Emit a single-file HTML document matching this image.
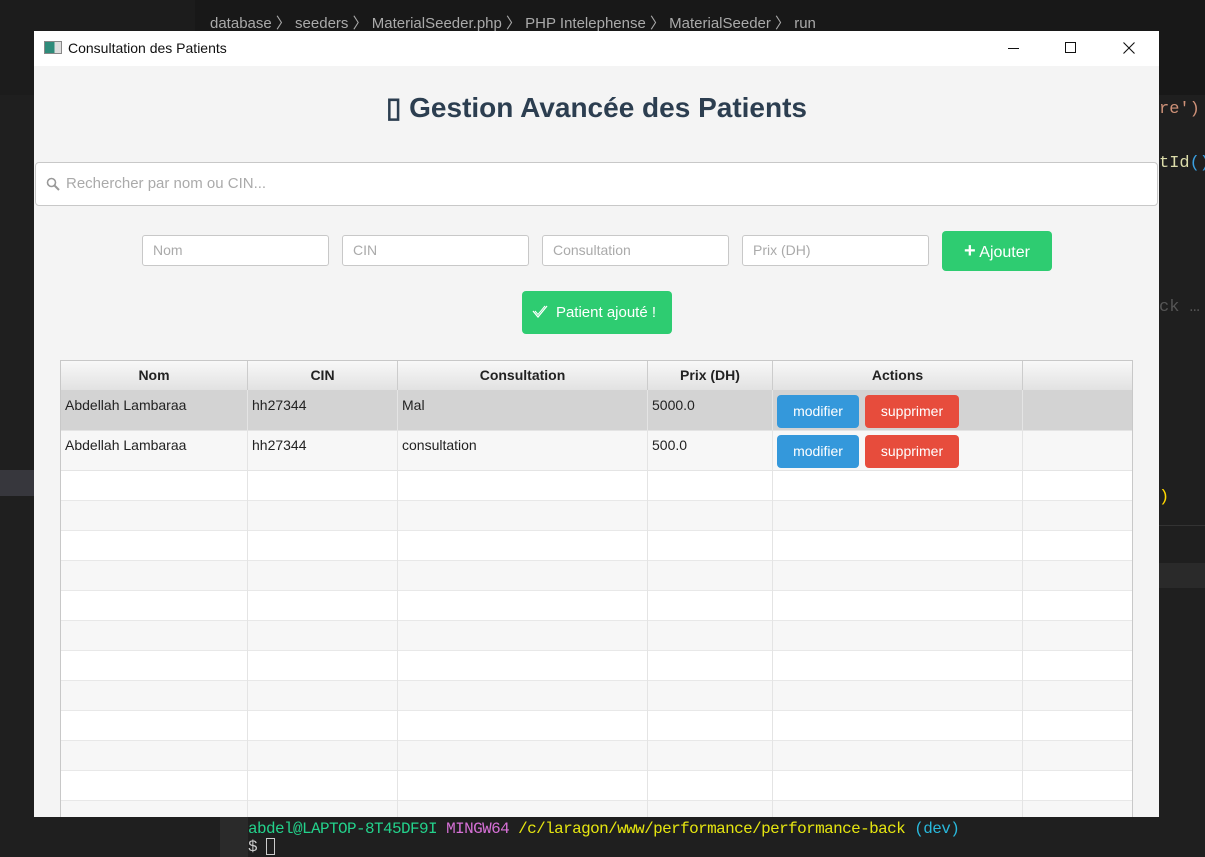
<!DOCTYPE html>
<html><head><meta charset="utf-8"><style>
*{box-sizing:border-box;margin:0;padding:0}
body{width:1205px;height:857px;background:#1f1f1f;position:relative;overflow:hidden;font-family:"Liberation Sans",sans-serif}
.abs{position:absolute}
.win{left:34px;top:31px;width:1125px;height:786px;background:#f4f4f4;overflow:hidden}
.tb{left:0;top:0;width:1125px;height:35px;background:#fff;font-size:14px;color:#111}
.inp{position:absolute;background:#fff;border:1px solid #c8c8c8;border-radius:3px;font-size:14px;color:#aaa;padding-left:10px;line-height:29px;height:31px}
.hdr{position:absolute;top:0;height:29px;background:linear-gradient(#f8f8f8,#e2e2e2);border-right:1px solid #ccc;font-weight:bold;font-size:14px;color:#222;text-align:center;line-height:29px}
.cell{position:absolute;font-size:14px;color:#222;padding-left:4px;padding-top:7px}
.btn{position:absolute;height:33px;border-radius:4px;color:#fff;font-size:14px;text-align:center;line-height:33px}
</style></head><body>
<div class="abs" style="left:195px;top:0;width:1010px;height:95px;background:#181818"></div>
<div class="abs" style="left:0;top:0;width:195px;height:95px;background:#1c1c1c"></div>
<div class="abs" style="left:210px;top:12px;font-size:15px;color:#aaa">database 〉 seeders 〉 MaterialSeeder.php 〉 PHP Intelephense 〉 MaterialSeeder 〉 run</div>
<div class="abs" style="left:0;top:470px;width:34px;height:26px;background:#37373d"></div>
<div class="abs" style="left:1159px;top:100px;font:17px 'Liberation Mono',monospace;color:#ce9178">re') </div>
<div class="abs" style="left:1159px;top:154px;font:17px 'Liberation Mono',monospace;color:#dcdcaa">tId<span style="color:#3a9fe0">()</span></div>
<div class="abs" style="left:1159px;top:298px;font:17px 'Liberation Mono',monospace;color:#555">ck …</div>
<div class="abs" style="left:1159px;top:488px;font:17px 'Liberation Mono',monospace;color:#ffd700">)</div>
<div class="abs" style="left:1159px;top:525px;width:46px;height:1px;background:#333"></div>
<div class="abs" style="left:1159px;top:563px;width:46px;height:25px;background:#2a2a2a"></div>
<div class="abs" style="left:220px;top:817px;width:28px;height:40px;background:#2a2a2a"></div>
<div class="abs" style="left:248px;top:820px;font:16px 'Liberation Mono',monospace;letter-spacing:-0.6px;white-space:nowrap"><span style="color:#23d18b">abdel@LAPTOP-8T45DF9I</span> <span style="color:#d670d6">MINGW64</span> <span style="color:#e5e510">/c/laragon/www/performance/performance-back</span> <span style="color:#29b8db">(dev)</span><br><span style="color:#ccc">$ </span><span style="display:inline-block;width:9px;height:17px;border:1px solid #ccc;vertical-align:middle"></span></div>

<div class="abs win">
 <div class="abs tb">
  <div class="abs" style="left:10px;top:10px;width:18px;height:13px;border:1px solid #888;background:linear-gradient(90deg,#2e8b7a 60%,#ddd 60%)"></div>
  <div class="abs" style="left:34px;top:9px">Consultation des Patients</div>
  <div class="abs" style="left:974px;top:17px;width:11px;height:1px;background:#111"></div>
  <div class="abs" style="left:1031px;top:11px;width:11px;height:11px;border:1px solid #111"></div>
  <svg class="abs" style="left:1089px;top:11px" width="12" height="12"><path d="M0.5 0.5L11.5 11.5M11.5 0.5L0.5 11.5" stroke="#111" stroke-width="1.1"/></svg>
 </div>
 <div class="abs" style="left:0;top:60px;width:1125px;text-align:center;font-size:28px;font-weight:bold;color:#2c3e50">▯ Gestion Avancée des Patients</div>
 <div class="inp" style="left:1px;top:131px;width:1123px;height:44px;line-height:42px;font-size:15px;padding-left:30px;border-radius:4px">Rechercher par nom ou CIN...</div>
 <svg class="abs" style="left:12px;top:146px" width="14" height="14"><circle cx="5.5" cy="5.5" r="4" fill="none" stroke="#999" stroke-width="1.6"/><line x1="8.5" y1="8.5" x2="13" y2="13" stroke="#999" stroke-width="2"/></svg>
 <div class="inp" style="left:108px;top:204px;width:187px">Nom</div>
 <div class="inp" style="left:308px;top:204px;width:187px">CIN</div>
 <div class="inp" style="left:508px;top:204px;width:187px">Consultation</div>
 <div class="inp" style="left:708px;top:204px;width:187px">Prix (DH)</div>
 <div class="btn" style="left:908px;top:200px;width:110px;height:40px;line-height:40px;background:#2ecc71;font-size:16px"><b style="font-size:20px">+</b> Ajouter</div>
 <div class="btn" style="left:488px;top:260px;width:150px;height:43px;line-height:43px;background:#2ecc71;font-size:15px;padding-left:18px">Patient ajouté !</div>
 <svg class="abs" style="left:498px;top:274px" width="16" height="14"><path d="M1 6L6 12L15 1" fill="none" stroke="#fff" stroke-width="1.3"/><path d="M3 6L6 9.5L13 1" fill="none" stroke="#fff" stroke-width="1"/></svg>

 <div class="abs" style="left:26px;top:329px;width:1073px;height:460px;background:#fff;border:1px solid #c8c8c8;overflow:hidden">
  <div class="hdr" style="left:0;width:187px">Nom</div>
  <div class="hdr" style="left:187px;width:150px">CIN</div>
  <div class="hdr" style="left:337px;width:250px">Consultation</div>
  <div class="hdr" style="left:587px;width:125px">Prix (DH)</div>
  <div class="hdr" style="left:712px;width:250px">Actions</div>
  <div class="hdr" style="left:962px;width:111px"></div>
  <div class="abs" style="left:0;top:29px;width:1073px;height:40px;background:#d3d3d3"></div>
  <div class="abs" style="left:0;top:69px;width:1073px;height:40px;background:#f7f7f7;border-top:1px solid #e4e4e4"></div>
  <div class="abs" style="left:0;top:109px;width:1073px;height:400px;background:repeating-linear-gradient(#fff 0,#fff 29px,#e8e8e8 29px,#e8e8e8 30px,#f7f7f7 30px,#f7f7f7 59px,#e8e8e8 59px,#e8e8e8 60px);border-top:1px solid #e4e4e4"></div>
  <div class="abs" style="left:186px;top:29px;width:1px;height:440px;background:#e4e4e4"></div>
  <div class="abs" style="left:336px;top:29px;width:1px;height:440px;background:#e4e4e4"></div>
  <div class="abs" style="left:586px;top:29px;width:1px;height:440px;background:#e4e4e4"></div>
  <div class="abs" style="left:711px;top:29px;width:1px;height:440px;background:#e4e4e4"></div>
  <div class="abs" style="left:961px;top:29px;width:1px;height:440px;background:#e4e4e4"></div>
  <div class="cell" style="left:0;top:29px">Abdellah Lambaraa</div>
  <div class="cell" style="left:187px;top:29px">hh27344</div>
  <div class="cell" style="left:337px;top:29px">Mal</div>
  <div class="cell" style="left:587px;top:29px">5000.0</div>
  <div class="btn" style="left:716px;top:34px;width:82px;background:#3498db">modifier</div>
  <div class="btn" style="left:804px;top:34px;width:94px;background:#e74c3c">supprimer</div>
  <div class="cell" style="left:0;top:69px">Abdellah Lambaraa</div>
  <div class="cell" style="left:187px;top:69px">hh27344</div>
  <div class="cell" style="left:337px;top:69px">consultation</div>
  <div class="cell" style="left:587px;top:69px">500.0</div>
  <div class="btn" style="left:716px;top:74px;width:82px;background:#3498db">modifier</div>
  <div class="btn" style="left:804px;top:74px;width:94px;background:#e74c3c">supprimer</div>
 </div>
</div>
</body></html>
